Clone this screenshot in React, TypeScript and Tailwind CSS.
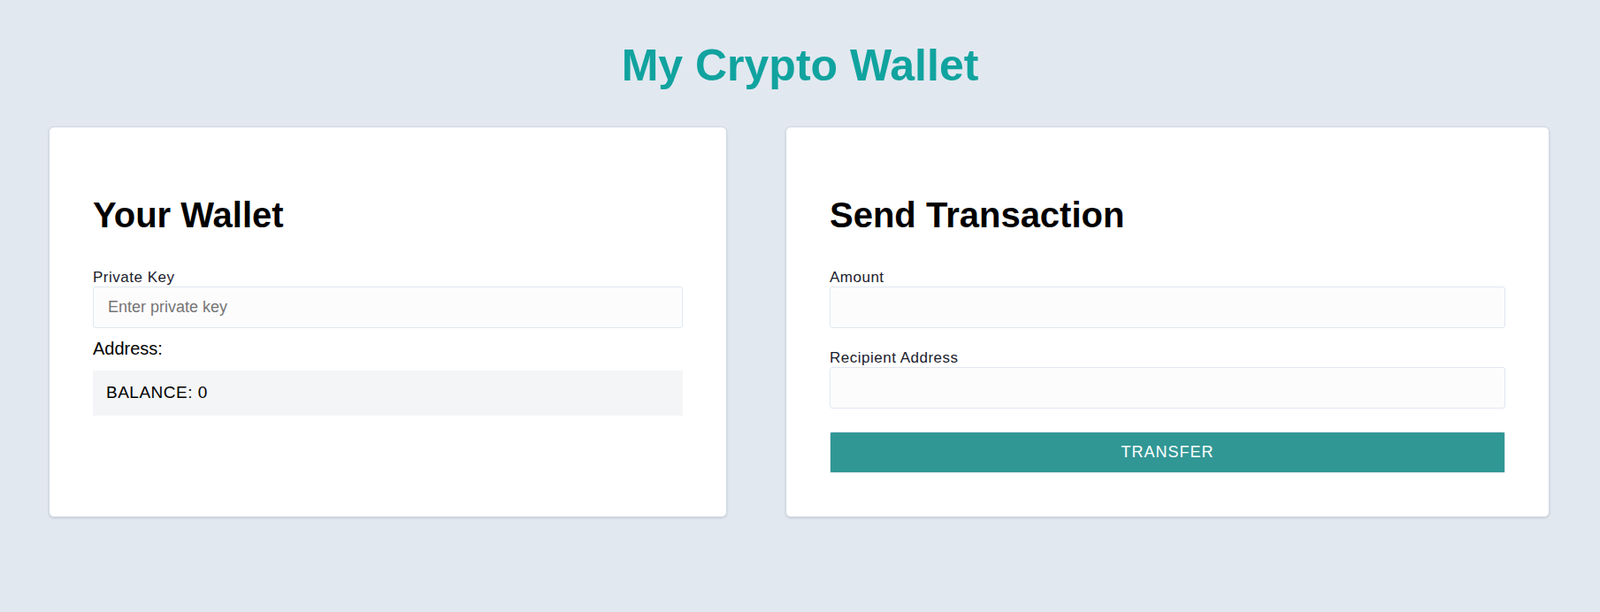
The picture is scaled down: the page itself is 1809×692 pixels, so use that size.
import { useState } from 'react';

const font = { fontFamily: '"Liberation Sans", Arial, sans-serif' };

const Label = ({ children }: { children: string }) => (
  <label className="block text-[17px] leading-[20px] tracking-[0.5px] text-[#1a202c]">{children}</label>
);

const Field = ({ value, onChange, placeholder }: { value: string; onChange: (v: string) => void; placeholder?: string }) => (
  <input
    value={value}
    onChange={(e) => onChange(e.target.value)}
    placeholder={placeholder}
    className="block w-full h-[47px] px-4 text-[18px] bg-[#fcfcfd] border border-[#e2e8f0] rounded-[3px] outline-none placeholder:text-[#757575]"
  />
);

const WalletCard = () => {
  const [privateKey, setPrivateKey] = useState('');
  const balance = 0;

  return (
    <div className="w-[767px] bg-white border border-[#cfd8e3] rounded-md shadow-sm p-[49px]">
      <h2 className="mt-[30px] text-[40px] leading-none font-bold text-black">Your Wallet</h2>
      <div className="mt-[41px]">
        <Label>Private Key</Label>
        <Field value={privateKey} onChange={setPrivateKey} placeholder="Enter private key" />
      </div>
      <div className="mt-[11px] text-[20px] leading-[24px] text-black">Address:</div>
      <div className="mt-[13px] h-[51px] flex items-center px-[15px] bg-[#f4f5f7] text-[19px] tracking-[0.5px] text-black">
        BALANCE: {balance}
      </div>
    </div>
  );
};

const TransferCard = () => {
  const [amount, setAmount] = useState('');
  const [recipient, setRecipient] = useState('');

  return (
    <div className="flex-1 bg-white border border-[#cfd8e3] rounded-md shadow-sm p-[49px]">
      <h2 className="mt-[30px] text-[40px] leading-none font-bold text-black">Send Transaction</h2>
      <div className="mt-[41px]">
        <Label>Amount</Label>
        <Field value={amount} onChange={setAmount} />
      </div>
      <div className="mt-[24px]">
        <Label>Recipient Address</Label>
        <Field value={recipient} onChange={setRecipient} />
      </div>
      <button className="mt-[26px] w-full h-[47px] bg-[#319795] border border-[#e2e8f0] rounded-[2px] text-white text-[18px] tracking-[1px]">
        TRANSFER
      </button>
    </div>
  );
};

export default function App() {
  return (
    <div className="min-h-screen bg-[#e2e8f0] pt-[49px]" style={font}>
      <h1 className="text-center text-[50px] leading-none font-bold text-[#11a39f]">My Crypto Wallet</h1>
      <div className="mt-[44px] flex items-stretch gap-[66px] pl-[55px] pr-[57px]">
        <WalletCard />
        <TransferCard />
      </div>
    </div>
  );
}
